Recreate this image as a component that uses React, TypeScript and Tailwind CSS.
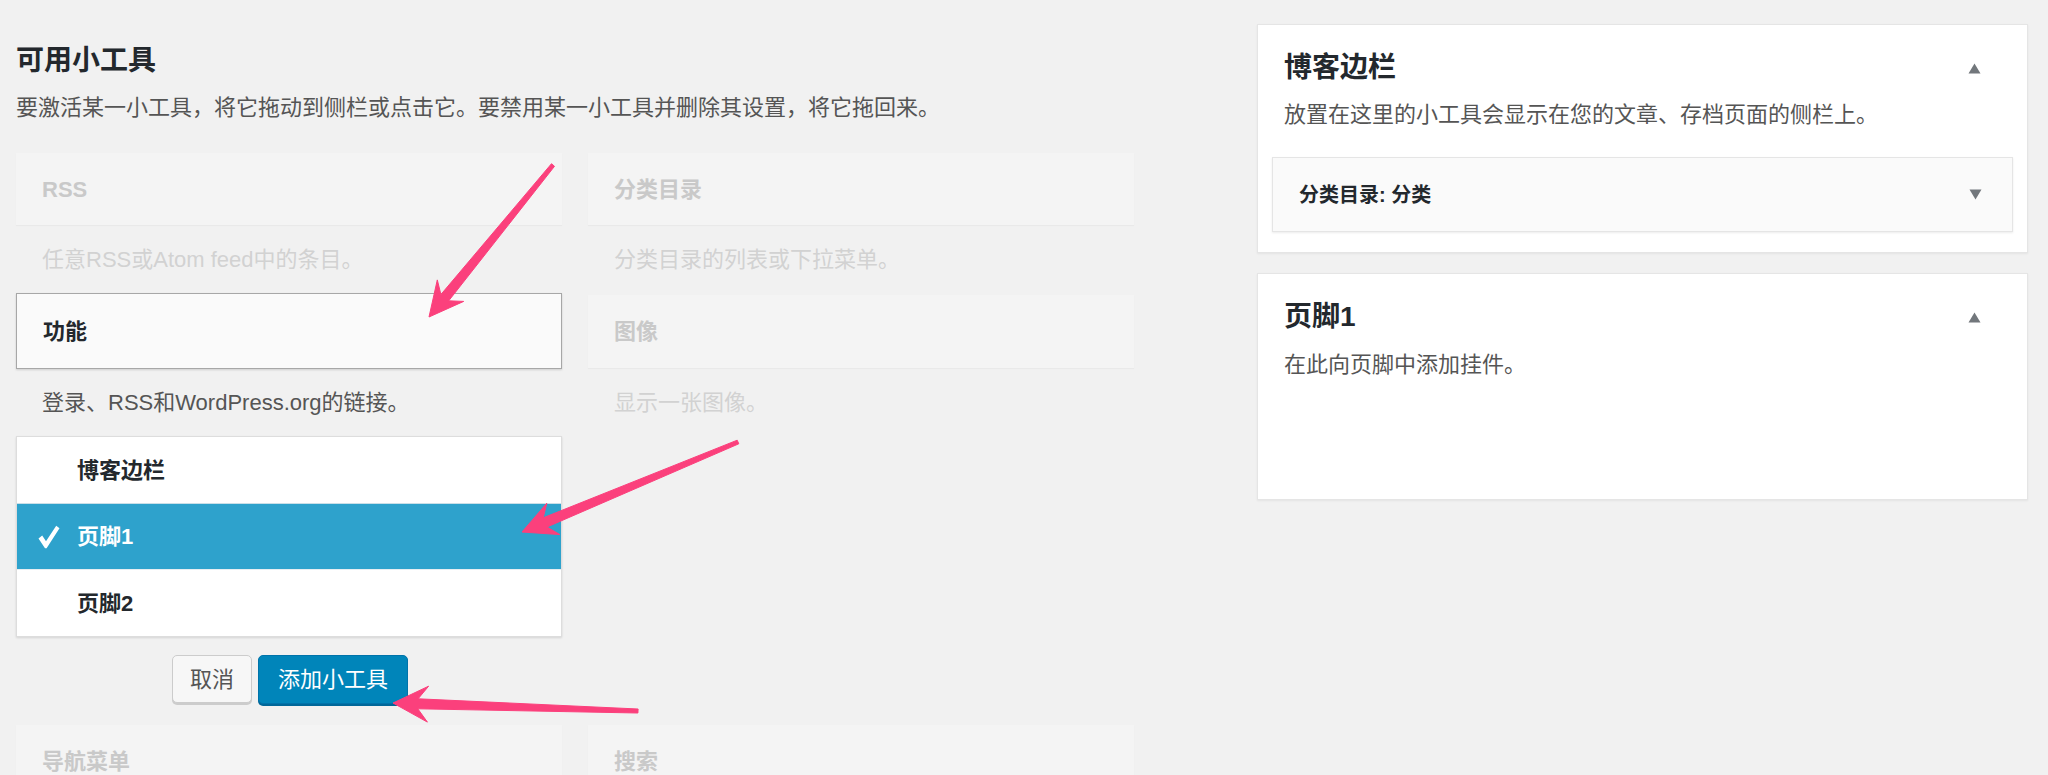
import React from "react";

type Pt = [number, number];

function arrowPoints(tail: Pt, tip: Pt, headLen = 34, headHalf = 17, neckBack = 25, neckHalf = 5, tailHalf = 2): string {
  const dx = tail[0] - tip[0];
  const dy = tail[1] - tip[1];
  const L = Math.sqrt(dx * dx + dy * dy);
  const ux = dx / L;
  const uy = dy / L;
  const px = -uy;
  const py = ux;
  const p = (a: number, b: number): string =>
    `${(tip[0] + ux * a + px * b).toFixed(1)},${(tip[1] + uy * a + py * b).toFixed(1)}`;
  const t = (b: number): string => `${(tail[0] + px * b).toFixed(1)},${(tail[1] + py * b).toFixed(1)}`;
  return [
    `${tip[0]},${tip[1]}`,
    p(headLen, headHalf),
    p(neckBack, neckHalf),
    t(tailHalf),
    t(-tailHalf),
    p(neckBack, -neckHalf),
    p(headLen, -headHalf),
  ].join(" ");
}

const Up = () => (
  <svg width="13" height="11" viewBox="0 0 13 11" className="shrink-0">
    <polygon points="6.5,0.5 12.5,10.5 0.5,10.5" fill="#72777c" />
  </svg>
);

const Down = () => (
  <svg width="13" height="11" viewBox="0 0 13 11" className="shrink-0">
    <polygon points="0.5,0.5 12.5,0.5 6.5,10.5" fill="#72777c" />
  </svg>
);

const Check = () => (
  <svg width="22" height="24" viewBox="0 0 22 24" className="shrink-0">
    <path d="M0.5 13.5 L4.2 10.6 L8 16.2 L18.2 0.8 L21.5 3.2 L8.6 23.2 L7 23.2 Z" fill="#ffffff" />
  </svg>
);

function FadedCard({ title }: { title: string }) {
  return (
    <div className="h-[72px] bg-[#f4f4f4] shadow-[0_1px_1px_rgba(0,0,0,0.03)] flex items-center pl-[26px]">
      <span className="text-[22px] font-semibold text-[#c9c9c9]">{title}</span>
    </div>
  );
}

function FadedDesc({ text, h }: { text: string; h: string }) {
  return (
    <div className={`${h} flex items-center pl-[26px] text-[22px] text-[#d2d2d2]`}>{text}</div>
  );
}

export default function App() {
  const font = "font-['Liberation_Sans','Noto_Sans_CJK_SC',sans-serif]";
  return (
    <div className={`relative w-[2048px] h-[775px] overflow-hidden bg-[#f1f1f1] ${font}`}>
      <div className="flex pl-[16px]">
        {/* Left: available widgets */}
        <div className="w-[1118px] shrink-0">
          <h2 className="mt-[41px] text-[28px] leading-[40px] font-semibold text-[#23282d]">可用小工具</h2>
          <p className="mt-[11px] text-[22px] leading-[32px] text-[#555555]">
            要激活某一小工具，将它拖动到侧栏或点击它。要禁用某一小工具并删除其设置，将它拖回来。
          </p>

          <div className="mt-[29px] grid grid-cols-[546px_546px] gap-x-[26px] items-center">
            <FadedCard title="RSS" />
            <FadedCard title="分类目录" />

            <FadedDesc h="h-[68px]" text="任意RSS或Atom feed中的条目。" />
            <FadedDesc h="h-[68px]" text="分类目录的列表或下拉菜单。" />

            <div className="h-[76px] bg-[#fafafa] border border-[#a7a7a7] shadow-[0_1px_2px_rgba(0,0,0,0.15)] flex items-center justify-start pl-[26px]">
              <span className="text-[22px] font-semibold text-[#23282d]">功能</span>
            </div>
            <div className="h-[73px] bg-[#f4f4f4] shadow-[0_1px_1px_rgba(0,0,0,0.03)] flex items-center pl-[26px]">
              <span className="text-[22px] font-semibold text-[#c9c9c9]">图像</span>
            </div>

            <div className="h-[67px] flex items-center pl-[26px] text-[22px] text-[#555555]">
              登录、RSS和WordPress.org的链接。
            </div>
            <FadedDesc h="h-[67px]" text="显示一张图像。" />

            <div className="self-start">
              <div className="bg-white border border-[#dddddd] shadow-[0_1px_2px_rgba(0,0,0,0.12)]">
                <div className="h-[66px] flex items-center pl-[21px]">
                  <span className="w-[22px] shrink-0" />
                  <span className="ml-[17px] text-[22px] font-semibold text-[#23282d]">博客边栏</span>
                </div>
                <div className="h-[66px] flex items-center pl-[21px] bg-[#2ea2cc] border-t border-[#c9dfe8]">
                  <Check />
                  <span className="ml-[17px] text-[22px] font-semibold text-white">页脚1</span>
                </div>
                <div className="h-[67px] flex items-center pl-[21px] border-t border-[#e6eef2]">
                  <span className="w-[22px] shrink-0" />
                  <span className="ml-[17px] text-[22px] font-semibold text-[#23282d]">页脚2</span>
                </div>
              </div>
              <div className="mt-[18px] mb-[21px] flex justify-center gap-[6px] pl-[2px]">
                <button className="h-[48px] w-[80px] rounded-[5px] bg-[#f7f7f7] border border-[#cccccc] shadow-[0_2px_0_#cccccc] text-[22px] text-[#555555]">
                  取消
                </button>
                <button className="h-[49px] w-[150px] rounded-[5px] bg-[#0085ba] border border-[#0073aa] shadow-[0_2px_0_#006799] text-[22px] text-white">
                  添加小工具
                </button>
              </div>
            </div>
            <div />

            <FadedCard title="导航菜单" />
            <FadedCard title="搜索" />
          </div>
        </div>

        {/* Right: sidebars */}
        <div className="ml-[123px] w-[771px] shrink-0 mt-[24px]">
          <div className="bg-white border border-[#e5e5e5] shadow-[0_1px_2px_rgba(0,0,0,0.06)] pb-[20px]">
            <div className="mt-[23px] h-[40px] flex items-center justify-between pl-[26px] pr-[46px]">
              <span className="text-[28px] font-semibold text-[#23282d]">博客边栏</span>
              <Up />
            </div>
            <p className="mt-[11px] pl-[26px] text-[22px] leading-[32px] text-[#555555]">
              放置在这里的小工具会显示在您的文章、存档页面的侧栏上。
            </p>
            <div className="mt-[26px] mx-[14px] h-[75px] bg-[#fafafa] border border-[#e5e5e5] shadow-[0_1px_2px_rgba(0,0,0,0.08)] flex items-center justify-between pl-[26px] pr-[30px]">
              <span className="text-[20px] font-semibold text-[#23282d]">分类目录: 分类</span>
              <Down />
            </div>
          </div>

          <div className="mt-[20px] h-[227px] bg-white border border-[#e5e5e5] shadow-[0_1px_2px_rgba(0,0,0,0.06)]">
            <div className="mt-[23px] h-[40px] flex items-center justify-between pl-[26px] pr-[46px]">
              <span className="text-[28px] font-semibold text-[#23282d]">页脚1</span>
              <Up />
            </div>
            <p className="mt-[12px] pl-[26px] text-[22px] leading-[32px] text-[#555555]">在此向页脚中添加挂件。</p>
          </div>
        </div>
      </div>

      {/* Annotation arrows */}
      <svg className="absolute inset-0 pointer-events-none" width="2048" height="775" viewBox="0 0 2048 775">
        <g fill="#fb407c" stroke="#fb407c" strokeWidth="1" strokeLinejoin="round">
          <polygon points={arrowPoints([553, 165], [429, 317])} />
          <polygon points={arrowPoints([738, 442], [522, 532])} />
          <polygon points={arrowPoints([638, 711], [393, 703], 35, 18)} />
        </g>
      </svg>
    </div>
  );
}
